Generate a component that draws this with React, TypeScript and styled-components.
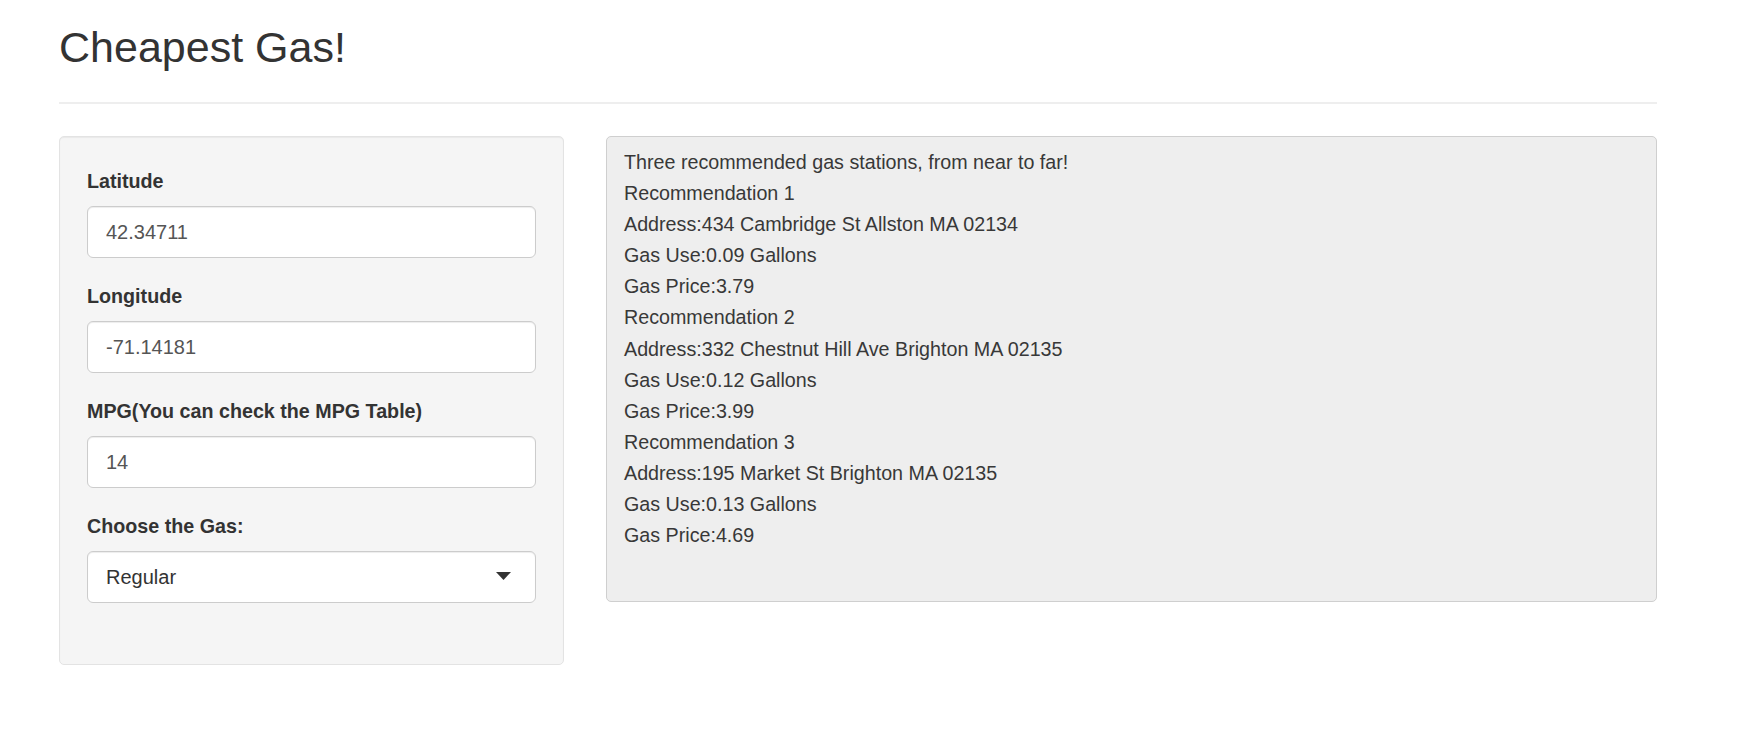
import React from "react";
import styled, { createGlobalStyle } from "styled-components";

const Global = createGlobalStyle`
  html, body { margin: 0; padding: 0; background: #fff; }
  body {
    font-family: "Liberation Sans", Arial, Helvetica, sans-serif;
    color: #333;
  }
  * { box-sizing: border-box; }
`;

const Page = styled.div`
  padding: 0 93px 0 59px;
`;

const Title = styled.h2`
  margin: 24px 0 0 0;
  font-size: 43px;
  line-height: 46px;
  font-weight: 400;
  color: #333;
`;

const Rule = styled.hr`
  margin: 32px 0 32px 0;
  border: 0;
  border-top: 2px solid #eee;
  height: 0;
`;

const Row = styled.div`
  display: flex;
  align-items: flex-start;
  gap: 42px;
`;

const Sidebar = styled.form`
  flex: 0 0 505px;
  display: flex;
  flex-direction: column;
  gap: 24px;
  padding: 30px 27px 61px 27px;
  background: #f5f5f5;
  border: 1px solid #e3e3e3;
  border-radius: 5px;
  box-shadow: inset 0 1px 1px rgba(0, 0, 0, 0.05);
`;

const Group = styled.div`
  display: flex;
  flex-direction: column;
  gap: 11px;
`;

const Label = styled.label`
  font-size: 19.7px;
  line-height: 28px;
  font-weight: 700;
  color: #333;
`;

const Field = styled.input`
  height: 52px;
  width: 100%;
  padding: 0 18px;
  font-family: "Liberation Sans", Arial, Helvetica, sans-serif;
  font-size: 20px;
  color: #555;
  background: #fff;
  border: 1px solid #ccc;
  border-radius: 6px;
  box-shadow: inset 0 1px 1px rgba(0, 0, 0, 0.075);
  outline: none;
`;

const Select = styled.div`
  height: 52px;
  display: flex;
  align-items: center;
  justify-content: space-between;
  padding: 0 24px 0 18px;
  font-size: 20px;
  color: #333;
  background: #fff;
  border: 1px solid #ccc;
  border-radius: 6px;
  box-shadow: inset 0 1px 1px rgba(0, 0, 0, 0.075);
`;

const Caret = styled.svg`
  width: 15px;
  height: 8px;
  margin-bottom: 2px;
`;

const Output = styled.pre`
  flex: 1;
  margin: 0;
  padding: 10px 17px 50px 17px;
  background: #eeeeee;
  border: 1px solid #cfcfcf;
  border-radius: 5px;
  font-family: "Liberation Sans", Arial, Helvetica, sans-serif;
  font-size: 19.7px;
  line-height: 31.1px;
  color: #383838;
  white-space: pre-wrap;
`;

const lines = [
  "Three recommended gas stations, from near to far!",
  "Recommendation 1",
  "Address:434 Cambridge St Allston MA 02134",
  "Gas Use:0.09 Gallons",
  "Gas Price:3.79",
  "Recommendation 2",
  "Address:332 Chestnut Hill Ave Brighton MA 02135",
  "Gas Use:0.12 Gallons",
  "Gas Price:3.99",
  "Recommendation 3",
  "Address:195 Market St Brighton MA 02135",
  "Gas Use:0.13 Gallons",
  "Gas Price:4.69",
];

const fields = [
  { id: "lat", label: "Latitude", value: "42.34711" },
  { id: "lng", label: "Longitude", value: "-71.14181" },
  { id: "mpg", label: "MPG(You can check the MPG Table)", value: "14" },
];

export default function App() {
  return (
    <>
      <Global />
      <Page>
        <Title>Cheapest Gas!</Title>
        <Rule />
        <Row>
          <Sidebar onSubmit={(e) => e.preventDefault()}>
            {fields.map((f) => (
              <Group key={f.id}>
                <Label htmlFor={f.id}>{f.label}</Label>
                <Field id={f.id} type="text" defaultValue={f.value} />
              </Group>
            ))}
            <Group>
              <Label>Choose the Gas:</Label>
              <Select>
                <span>Regular</span>
                <Caret viewBox="0 0 15 8">
                  <path d="M0 0 L15 0 L7.5 8 Z" fill="#333" />
                </Caret>
              </Select>
            </Group>
          </Sidebar>
          <Output>{lines.join("\n")}</Output>
        </Row>
      </Page>
    </>
  );
}
